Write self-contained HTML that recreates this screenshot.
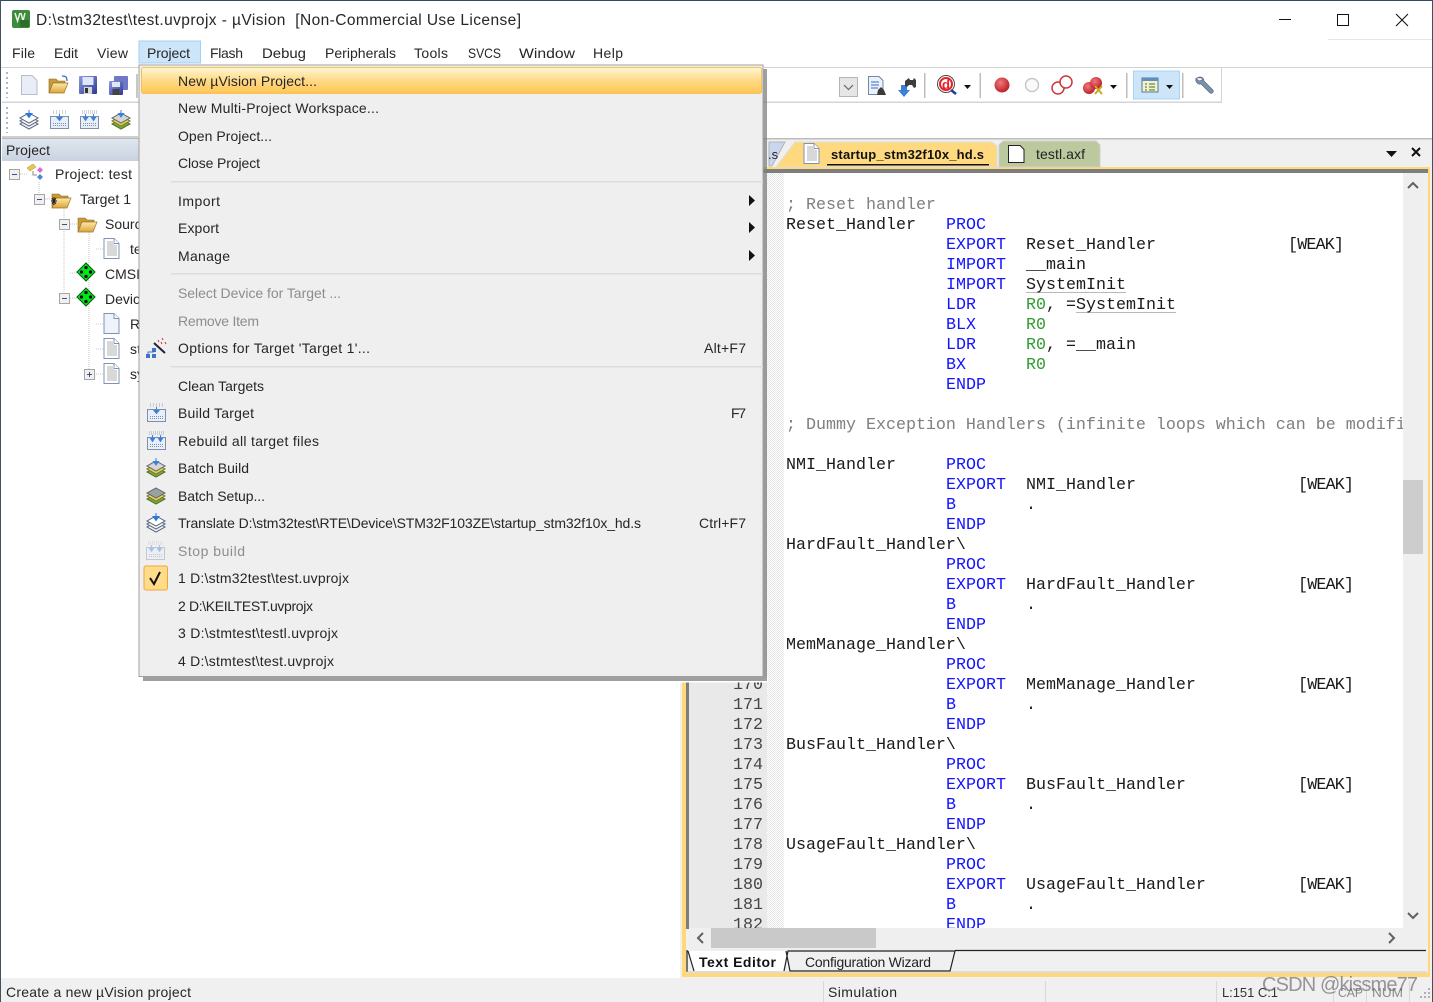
<!DOCTYPE html>
<html><head><meta charset="utf-8"><title>µVision</title>
<style>
html,body{margin:0;padding:0;background:#fff;width:1433px;height:1002px;overflow:hidden}
svg{display:block}
.u{font-family:"Liberation Sans",sans-serif;font-size:14px;fill:#262626}
.d{fill:#8d8d8d}
.c{font-family:"Liberation Mono",monospace;font-size:16.67px;fill:#1a1a1a;white-space:pre}
.k{fill:#1414ff}.g{fill:#7f7f7f}.r{fill:#2f9d2f}
.n{font-family:"Liberation Mono",monospace;font-size:16.67px;fill:#444}
</style></head><body>
<svg xmlns="http://www.w3.org/2000/svg" width="1433" height="1002" viewBox="0 0 1433 1002">
<defs>
<linearGradient id="hl" x1="0" y1="0" x2="0" y2="1"><stop offset="0" stop-color="#fff6d2"/><stop offset=".45" stop-color="#ffdc8e"/><stop offset="1" stop-color="#ffc552"/></linearGradient>
<linearGradient id="ph" x1="0" y1="0" x2="0" y2="1"><stop offset="0" stop-color="#dfe6ef"/><stop offset="1" stop-color="#c9d3e0"/></linearGradient>
<linearGradient id="fo" x1="0" y1="0" x2="0" y2="1"><stop offset="0" stop-color="#ffe9a8"/><stop offset="1" stop-color="#dba43a"/></linearGradient>
<linearGradient id="sv" x1="0" y1="0" x2="1" y2="1"><stop offset="0" stop-color="#8f9be0"/><stop offset="1" stop-color="#2d3a96"/></linearGradient>
<radialGradient id="rd" cx=".4" cy=".35" r=".7"><stop offset="0" stop-color="#f0787c"/><stop offset="1" stop-color="#b81a22"/></radialGradient>
<pattern id="dit" width="2" height="2" patternUnits="userSpaceOnUse"><rect width="2" height="2" fill="#fff"/><rect width="1" height="1" fill="#e6e6e6"/><rect x="1" y="1" width="1" height="1" fill="#e6e6e6"/></pattern>
<g id="doc"><path d="M1 .5H11L16 5.5V20.5H1Z" fill="#eef2fa" stroke="#7f93b5"/><path d="M11 .5V5.5H16" fill="#fff" stroke="#7f93b5"/></g>
<g id="docd"><path d="M1 .5H11L16 5.5V20.5H1Z" fill="#fff" stroke="#7f93b5"/><path d="M11 .5V5.5H16" fill="#fff" stroke="#7f93b5"/><rect x="4" y="3" width="7" height="15" fill="#d8d8d8"/><path d="M11 7h3v11h-3z" fill="#d8d8d8"/></g>
<g id="dia"><path d="M9 0L18 9L9 18L0 9Z" fill="#00e51c" stroke="#0a5a12"/><circle cx="9" cy="4.5" r="1.6"/><circle cx="9" cy="13.5" r="1.6"/><circle cx="4.5" cy="9" r="1.6"/><circle cx="13.5" cy="9" r="1.6"/></g>
<g id="fold"><path d="M1 17V3H8L10 5H17V7H5L1 17Z" fill="#c99a3a" stroke="#8d6b22" stroke-width=".6"/><path d="M1 17L5 7H20L16 17Z" fill="url(#fo)" stroke="#9c7626" stroke-width=".7"/></g>
<g id="minus"><rect x=".5" y=".5" width="10" height="10" fill="#f0f0f0" stroke="#a5a5a5"/><path d="M3 5.5H8" stroke="#3a4f8a"/></g>
<g id="plus"><rect x=".5" y=".5" width="10" height="10" fill="#f0f0f0" stroke="#a5a5a5"/><path d="M3 5.5H8M5.5 3V8" stroke="#3a4f8a"/></g>
<g id="build"><rect x=".5" y="6.5" width="18" height="12" fill="#e9eff8" stroke="#7d8fae"/><path d="M3 13.5h13M3 15.5h13" stroke="#7d8fae" stroke-dasharray="1 1"/><path d="M3 1h13M3 3h13" stroke="#99a5bd" stroke-dasharray="1 2"/><path d="M9.5 4v5M7 7.5l2.500 3 2.500-3z" fill="#3b7fe0" stroke="#3b7fe0"/></g>
<g id="rebuild"><rect x=".5" y="6.500" width="18" height="12" fill="#e9eff8" stroke="#7d8fae"/><path d="M3 13.5h13M3 15.5h13" stroke="#7d8fae" stroke-dasharray="1 1"/><path d="M2 1h15M2 3h15" stroke="#99a5bd" stroke-dasharray="1 1"/><path d="M5.500 4v5M3.500 7.500l2 3 2-3zM13.500 4v5M11.500 7.500l2 3 2-3z" fill="#3b7fe0" stroke="#3b7fe0"/></g>
<g id="batch"><path d="M10 9L19 14L10 19L1 14Z" fill="#7aa83a" stroke="#4d6e22"/><path d="M10 6L19 11L10 16L1 11Z" fill="#e5cf55" stroke="#7d7430"/><path d="M10 3L19 8L10 13L1 8Z" fill="#d4d6d6" stroke="#5f6565"/><path d="M10 0v5M7.500 3.500l2.500 3.500 2.500-3.500z" fill="#3b7fe0" stroke="#3b7fe0"/></g>
<g id="batch2"><path d="M10 8L19 13L10 18L1 13Z" fill="#7aa83a" stroke="#4d6e22"/><path d="M10 5L19 10L10 15L1 10Z" fill="#e5cf55" stroke="#7d7430"/><path d="M10 2L19 7L10 12L1 7Z" fill="#9ba0a0" stroke="#5f6565"/></g>
<g id="trans"><path d="M10 9L19 14L10 19L1 14Z" fill="#eef2f8" stroke="#55627c"/><path d="M10 6L19 11L10 16L1 11Z" fill="#f6f8fc" stroke="#55627c"/><path d="M10 3L19 8L10 13L1 8Z" fill="#fff" stroke="#55627c"/><path d="M10 0v5M7 3.500l3 4 3-4z" fill="#2b78e4" stroke="#2b78e4"/></g>
<g id="wand"><path d="M9 6L20 16" stroke="#223" stroke-width="2"/><path d="M13 3l1 2M17 1l1 2M20 5l1 2M16 5l1 2" stroke="#d13a3a"/><rect x="7" y="11" width="4" height="4" fill="#3f73c8"/><rect x="1" y="17" width="4" height="4" fill="#3f73c8"/><rect x="7" y="17" width="4" height="4" fill="#3f73c8"/><path d="M3 17V15H9" fill="none" stroke="#3f73c8"/></g>
</defs>

<!-- window base -->
<rect width="1433" height="1002" fill="#fff"/>
<rect y="0" width="1433" height="1" fill="#2d4a66"/>

<!-- title -->
<rect x="12" y="10" width="18" height="18" rx="2" fill="#3f8a3c"/><path d="M15 13l2.500 8 2.500-8M21 13l2 8 2-8" fill="none" stroke="#e4f3df" stroke-width="1.500"/><rect x="20" y="20" width="9" height="7" fill="#2b6e2b"/>
<text class="u" x="36" y="25" style="font-size:15.5px" textLength="485" lengthAdjust="spacing">D:\stm32test\test.uvprojx - µVision &#160;[Non-Commercial Use License]</text>
<path d="M1279 19.500H1291" stroke="#111"/><rect x="1337.500" y="14.500" width="11" height="11" fill="none" stroke="#111"/><path d="M1396 14L1408 26M1408 14L1396 26" stroke="#111"/>
<rect x="1328" y="39" width="104" height="1" fill="#e5e5e5"/>

<!-- menu bar -->
<rect x="139" y="41" width="61.500" height="22" fill="#cce5f8" stroke="#a2d1f6"/>
<text class="u" x="12" y="58" textLength="23">File</text>
<text class="u" x="54" y="58" textLength="24">Edit</text>
<text class="u" x="97" y="58" textLength="31">View</text>
<text class="u" x="147" y="58" textLength="43">Project</text>
<text class="u" x="210" y="58" textLength="33">Flash</text>
<text class="u" x="262" y="58" textLength="44" lengthAdjust="spacingAndGlyphs">Debug</text>
<text class="u" x="325" y="58" textLength="71" lengthAdjust="spacingAndGlyphs">Peripherals</text>
<text class="u" x="414" y="58" textLength="34">Tools</text>
<text class="u" x="468" y="58" textLength="33" lengthAdjust="spacingAndGlyphs">SVCS</text>
<text class="u" x="519" y="58" textLength="56" lengthAdjust="spacingAndGlyphs">Window</text>
<text class="u" x="593" y="58" textLength="30">Help</text>

<!-- toolbars -->
<rect x="0" y="67" width="1433" height="1" fill="#d2d2d2"/>
<rect x="2" y="101.500" width="1219" height="1.500" fill="#d5d5d5"/>
<rect x="1221" y="68" width="1" height="35" fill="#d5d5d5"/>
<rect x="2" y="136" width="136" height="2" fill="#cfcfcf"/>
<path d="M7 72V98M7 107V133" stroke="#b5b5b5" stroke-width="2" stroke-dasharray="2 3"/>
<path d="M21.500 75.500H32L37 80.500V94.500H21.500Z" fill="#e9edf5" stroke="#b4bdcc"/>
<g transform="translate(48,76)"><use href="#fold"/><path d="M14 0c4 0 5 1 5 5" fill="none" stroke="#3f6fb8" stroke-width="1.300"/></g>
<g transform="translate(79,76)"><rect width="18" height="18" rx="1" fill="url(#sv)"/><rect x="3.500" y="1" width="11" height="8" fill="#dfe6f8"/><rect x="5" y="11" width="8" height="7" fill="#d8d8d8"/><rect x="6" y="12" width="3" height="5" fill="#333"/></g>
<g transform="translate(109,76)"><rect x="5" width="14" height="14" rx="1" fill="#6f78c8"/><rect y="5" width="14" height="14" rx="1" fill="url(#sv)"/><rect x="3" y="6" width="8" height="5" fill="#dfe6f8"/><rect x="3.500" y="13" width="7" height="6" fill="#444"/></g>
<rect x="136" y="74" width="2" height="24" fill="#c8c8c8"/>
<use href="#trans" x="19" y="110"/><use href="#build" x="50" y="110"/><use href="#rebuild" x="80" y="110"/><use href="#batch" x="111" y="110"/>

<!-- right toolbar -->
<rect x="839.500" y="77.500" width="18" height="19" fill="#e6e6e6" stroke="#b4b4b4"/><path d="M844 85l4.500 4.500L853 85" fill="none" stroke="#666" stroke-width="1.200"/>
<g transform="translate(868,76)"><path d="M.5.500H11L15 4.500V18.500H.5Z" fill="#eaf1fb" stroke="#6f86ad"/><path d="M3 6h8M3 9h8M3 12h7" stroke="#3a6fc0"/><path d="M10 14l3-3 3 3 2 5h-9z" fill="#3a3a3a"/></g>
<g transform="translate(897,76)"><path d="M4 9h6v5h3l-6 7-6-7h3z" fill="#3b7fd8"/><path d="M8 5l4-3 1 2h3l1-2 2 2v7l-2 1-2-3h-3l-2 2-2-1z" fill="#3d3d3d"/></g>
<rect x="924" y="73" width="1.500" height="25" fill="#bdbdbd"/>
<g transform="translate(937,75)"><circle cx="9" cy="9" r="9" fill="#4a4a4a"/><circle cx="9" cy="9" r="8" fill="#fff"/><circle cx="9" cy="9" r="6" fill="none" stroke="#e8222a" stroke-width="2"/><text x="5" y="14" style="font:bold 13px 'Liberation Sans',sans-serif" fill="#e8222a">d</text><path d="M14 15l5 4" stroke="#1d3f9a" stroke-width="2.500"/></g>
<path d="M964 85h7l-3.500 4z" fill="#111"/>
<rect x="979.500" y="73" width="1.500" height="25" fill="#bdbdbd"/>
<circle cx="1002" cy="85" r="7.500" fill="url(#rd)"/>
<circle cx="1032" cy="85" r="6.500" fill="#fafafa" stroke="#c8c8c8" stroke-width="1.500"/>
<circle cx="1058" cy="88" r="6" fill="#fff" stroke="#c8383c" stroke-width="1.500"/><circle cx="1066" cy="82" r="6" fill="#fff" stroke="#c8383c" stroke-width="1.500"/>
<circle cx="1089" cy="88" r="6" fill="url(#rd)"/><circle cx="1096" cy="83" r="6" fill="url(#rd)"/><path d="M1095 86l7 8M1102 86l-7 8" stroke="#c9a820" stroke-width="2"/>
<path d="M1110 85h7l-3.500 4z" fill="#111"/>
<rect x="1126" y="73" width="1.500" height="25" fill="#bdbdbd"/>
<rect x="1133.500" y="71" width="46" height="28" fill="#cce5f8" stroke="#a8d4f5"/>
<rect x="1142" y="78" width="16" height="14" fill="#f4f2c8" stroke="#4e7a9e"/><rect x="1142" y="78" width="16" height="3" fill="#5d8fc2"/><path d="M1145 84h2M1149 84h6M1145 87h2M1149 87h6M1145 90h2M1149 90h6" stroke="#4a6a3a"/>
<path d="M1166 85h7l-3.500 4z" fill="#111"/>
<rect x="1182" y="73" width="1.500" height="25" fill="#bdbdbd"/>
<path d="M1197 78c3-2 7-1 7 3l9 9c1 2-1 4-3 3l-9-9c-4 1-6-3-5-6l3 3 3-1 0-2z" fill="#7c8fa8" stroke="#56677e" stroke-width=".6"/>

<!-- project pane -->
<rect x="2" y="138" width="140" height="1" fill="#b8b8b8"/>
<rect x="2" y="139" width="140" height="22" fill="url(#ph)"/>
<text class="u" x="6" y="155" textLength="44">Project</text>
<!-- tree dots -->
<path d="M20 174H28M39 182V194M45 199H52M64 207V220M64 229V298M64 224H78M70 273H78M70 298H78M89 232V373M96 249H103M96 324H103M96 349H103M96 374H103" stroke="#c4c4c4" stroke-dasharray="1 1" fill="none"/>
<use href="#minus" x="9" y="169"/>
<path d="M27 168l6-4 3 3-6 4z" fill="#e8c64f" stroke="#a8902f" stroke-width=".5"/><path d="M37 170l3-3 3 3-3 3z" fill="#d76bd3"/><path d="M37 177l3-3 3 3-3 3z" fill="#4c86d6"/><path d="M33 171v4h4" fill="none" stroke="#888"/>
<text class="u" x="55" y="179" textLength="77">Project: test</text>
<use href="#minus" x="34" y="194"/>
<use href="#fold" transform="translate(51,191)"/><path d="M52 198l4 6M56 198l-4 6M51 201h6M54 197v8" stroke="#222" stroke-width="1"/>
<text class="u" x="80" y="204" textLength="51">Target 1</text>
<use href="#minus" x="59" y="219"/><use href="#fold" transform="translate(77,215)"/>
<text class="u" x="105" y="229">Source Group 1</text>
<use href="#docd" x="103" y="238"/>
<text class="u" x="130" y="254">test.c</text>
<use href="#dia" x="77" y="263"/><text class="u" x="105" y="279">CMSIS</text>
<use href="#minus" x="59" y="293"/><use href="#dia" x="77" y="288"/><text class="u" x="105" y="304">Device</text>
<use href="#doc" x="103" y="313"/><text class="u" x="130" y="329">RTE_Device.h</text>
<use href="#docd" x="103" y="338"/><text class="u" x="130" y="354">startup</text>
<use href="#plus" x="84" y="369"/><use href="#docd" x="103" y="363"/><text class="u" x="130" y="379">system</text>

<!-- editor frame -->
<rect x="680" y="138" width="752" height="840" fill="#f0f0f0"/>
<rect x="680" y="138" width="752" height="1.500" fill="#bdbdbd"/>
<rect x="682" y="167" width="748" height="810" fill="#ffd877"/>
<rect x="686" y="169" width="742" height="804" fill="#f0f0f0"/>
<rect x="686" y="169" width="742" height="4" fill="#7d7d7d"/>
<rect x="686" y="169" width="3" height="760" fill="#7d7d7d"/>
<rect x="689" y="173" width="78" height="756" fill="#e9e9e9"/>
<rect x="767" y="173" width="17" height="756" fill="url(#dit)"/>
<rect x="784" y="173" width="619" height="755" fill="#fff"/>
<rect x="1403" y="173" width="20" height="755" fill="#efefef"/>
<rect x="1403" y="480" width="20" height="74" fill="#cdcdcd"/>
<path d="M1408 188l5-5 5 5" fill="none" stroke="#606060" stroke-width="2"/>
<path d="M1408 913l5 5 5-5" fill="none" stroke="#606060" stroke-width="2"/>

<!-- tab bar -->
<path d="M769 166V142H785L772 166Z" fill="#c9d6ef" stroke="#b5b5b5"/>
<text class="u" x="768" y="159" style="font-size:13px">.s</text>
<path d="M776 167L795 142H992L997 146V167Z" fill="#ffd97f" stroke="#dedede"/>
<use href="#docd" x="803" y="143"/>
<text class="u" x="831" y="159" textLength="153" style="font-weight:bold;fill:#111;font-size:13px">startup_stm32f10x_hd.s</text>
<rect x="827" y="164" width="162" height="1.500" fill="#111"/>
<path d="M999 167V145L1003 141H1096L1100 145V167Z" fill="#bcc99f" stroke="#cfcfcf"/>
<path d="M1008.500 145.500H1020L1024 149.500V162.500H1008.500Z" fill="#fff" stroke="#222"/>
<text class="u" x="1036" y="159" textLength="49" style="fill:#222">testl.axf</text>
<path d="M1386 151h11l-5.500 6z" fill="#111"/>
<path d="M1412 148l8 8M1420 148l-8 8" stroke="#111" stroke-width="2"/>

<!-- line numbers -->
<g>
<text class="n" x="733" y="689">170</text><text class="n" x="733" y="709">171</text><text class="n" x="733" y="729">172</text><text class="n" x="733" y="749">173</text><text class="n" x="733" y="769">174</text><text class="n" x="733" y="789">175</text><text class="n" x="733" y="809">176</text><text class="n" x="733" y="829">177</text><text class="n" x="733" y="849">178</text><text class="n" x="733" y="869">179</text><text class="n" x="733" y="889">180</text><text class="n" x="733" y="909">181</text><text class="n" x="733" y="929">182</text>
</g>

<!-- code -->
<path d="M1026 292.500H1126M1076 312.500H1176" stroke="#b8b8b8"/>
<text class="c g" x="786" y="209">; Reset handler</text>
<text class="c" x="786" y="229">Reset_Handler</text><text class="c k" x="946" y="229">PROC</text>
<text class="c k" x="946" y="249">EXPORT</text><text class="c" x="1026" y="249">Reset_Handler</text><text class="c" x="1288" y="249" textLength="56">[WEAK]</text>
<text class="c k" x="946" y="269">IMPORT</text><text class="c" x="1026" y="269">__main</text>
<text class="c k" x="946" y="289">IMPORT</text><text class="c" x="1026" y="289">SystemInit</text>
<text class="c k" x="946" y="309">LDR</text><text class="c" x="1026" y="309"><tspan class="r">R0</tspan>, =SystemInit</text>
<text class="c k" x="946" y="329">BLX</text><text class="c r" x="1026" y="329">R0</text>
<text class="c k" x="946" y="349">LDR</text><text class="c" x="1026" y="349"><tspan class="r">R0</tspan>, =__main</text>
<text class="c k" x="946" y="369">BX</text><text class="c r" x="1026" y="369">R0</text>
<text class="c k" x="946" y="389">ENDP</text>
<svg x="784" y="410" width="619" height="30"><text class="c g" x="2" y="19">; Dummy Exception Handlers (infinite loops which can be modified)</text></svg>
<text class="c" x="786" y="469">NMI_Handler</text><text class="c k" x="946" y="469">PROC</text>
<text class="c k" x="946" y="489">EXPORT</text><text class="c" x="1026" y="489">NMI_Handler</text><text class="c" x="1298" y="489" textLength="56">[WEAK]</text>
<text class="c k" x="946" y="509">B</text><text class="c" x="1026" y="509">.</text>
<text class="c k" x="946" y="529">ENDP</text>
<text class="c" x="786" y="549">HardFault_Handler\</text>
<text class="c k" x="946" y="569">PROC</text>
<text class="c k" x="946" y="589">EXPORT</text><text class="c" x="1026" y="589">HardFault_Handler</text><text class="c" x="1298" y="589" textLength="56">[WEAK]</text>
<text class="c k" x="946" y="609">B</text><text class="c" x="1026" y="609">.</text>
<text class="c k" x="946" y="629">ENDP</text>
<text class="c" x="786" y="649">MemManage_Handler\</text>
<text class="c k" x="946" y="669">PROC</text>
<text class="c k" x="946" y="689">EXPORT</text><text class="c" x="1026" y="689">MemManage_Handler</text><text class="c" x="1298" y="689" textLength="56">[WEAK]</text>
<text class="c k" x="946" y="709">B</text><text class="c" x="1026" y="709">.</text>
<text class="c k" x="946" y="729">ENDP</text>
<text class="c" x="786" y="749">BusFault_Handler\</text>
<text class="c k" x="946" y="769">PROC</text>
<text class="c k" x="946" y="789">EXPORT</text><text class="c" x="1026" y="789">BusFault_Handler</text><text class="c" x="1298" y="789" textLength="56">[WEAK]</text>
<text class="c k" x="946" y="809">B</text><text class="c" x="1026" y="809">.</text>
<text class="c k" x="946" y="829">ENDP</text>
<text class="c" x="786" y="849">UsageFault_Handler\</text>
<text class="c k" x="946" y="869">PROC</text>
<text class="c k" x="946" y="889">EXPORT</text><text class="c" x="1026" y="889">UsageFault_Handler</text><text class="c" x="1298" y="889" textLength="56">[WEAK]</text>
<text class="c k" x="946" y="909">B</text><text class="c" x="1026" y="909">.</text>
<text class="c k" x="946" y="929">ENDP</text>

<!-- horizontal scrollbar and bottom tabs -->
<rect x="689" y="928" width="739" height="22" fill="#efefef"/>
<rect x="711" y="928" width="165" height="20" fill="#c9c9c9"/>
<path d="M703 933l-5 5 5 5" fill="none" stroke="#606060" stroke-width="2"/>
<path d="M1389 933l5 5-5 5" fill="none" stroke="#606060" stroke-width="2"/>
<rect x="689" y="950" width="739" height="23" fill="#f0f0f0"/>
<path d="M688 951L694 971H783L788 951Z" fill="#fff"/>
<path d="M688 951L694 971M784 971L788 951H955L950 971H790L786 951M955 950.500H1426M687 950V972" fill="none" stroke="#222" stroke-width="1.200"/>
<rect x="687" y="971.500" width="740" height="1" fill="#c8c8c8"/>
<text class="u" x="699" y="967" textLength="77" style="font-weight:bold;fill:#111">Text Editor</text>
<text class="u" x="805" y="967" textLength="126" style="fill:#222">Configuration Wizard</text>

<!-- white cover beneath menu, above editor -->
<rect x="680" y="677" width="88" height="5.500" fill="#fff"/>
<rect x="0" y="677" width="680" height="301" fill="#fff"/>

<!-- window side edges -->
<rect x="0" y="0" width="1" height="1002" fill="#44505c"/>
<rect x="1432" y="0" width="1" height="1002" fill="#44505c"/>

<!-- menu -->
<rect x="143" y="69" width="624" height="612" fill="#7f7f7f" opacity=".75"/>
<rect x="139" y="65" width="624" height="611.500" fill="#efefef" stroke="#a0a0a0"/>
<rect x="141.500" y="67.500" width="620" height="26" rx="2" fill="url(#hl)" stroke="#f6c35a"/>
<rect x="171" y="181" width="592" height="1.500" fill="#dcdcdc"/>
<rect x="171" y="273" width="592" height="1.500" fill="#dcdcdc"/>
<rect x="171" y="366" width="592" height="1.500" fill="#dcdcdc"/>

<text class="u" x="178" y="86" textLength="139">New µVision Project...</text>
<text class="u" x="178" y="113" textLength="201">New Multi-Project Workspace...</text>
<text class="u" x="178" y="141" textLength="94">Open Project...</text>
<text class="u" x="178" y="168" textLength="82">Close Project</text>
<text class="u" x="178" y="206" textLength="42">Import</text>
<text class="u" x="178" y="233" textLength="41">Export</text>
<text class="u" x="178" y="261" textLength="52">Manage</text>
<path d="M749 195l6 5.500-6 5.500zM749 222l6 5.500-6 5.500zM749 250l6 5.500-6 5.500z" fill="#111"/>
<text class="u d" x="178" y="298" textLength="163">Select Device for Target ...</text>
<text class="u d" x="178" y="326" textLength="81">Remove Item</text>
<use href="#wand" x="145" y="337"/>
<text class="u" x="178" y="353" textLength="192">Options for Target 'Target 1'...</text>
<text class="u" x="704" y="353" textLength="42">Alt+F7</text>
<text class="u" x="178" y="391" textLength="86">Clean Targets</text>
<use href="#build" x="147" y="403"/>
<text class="u" x="178" y="418" textLength="76">Build Target</text>
<text class="u" x="731" y="418" textLength="15">F7</text>
<use href="#rebuild" x="147" y="431"/>
<text class="u" x="178" y="446" textLength="141">Rebuild all target files</text>
<use href="#batch" x="146" y="458"/>
<text class="u" x="178" y="473" textLength="71">Batch Build</text>
<use href="#batch2" x="146" y="486"/>
<text class="u" x="178" y="501" textLength="87">Batch Setup...</text>
<use href="#trans" x="146" y="513"/>
<text class="u" x="178" y="528" textLength="463">Translate D:\stm32test\RTE\Device\STM32F103ZE\startup_stm32f10x_hd.s</text>
<text class="u" x="699" y="528" textLength="47">Ctrl+F7</text>
<g opacity=".4"><use href="#rebuild" x="146" y="541"/></g>
<text class="u d" x="178" y="556" textLength="67">Stop build</text>
<rect x="144" y="566" width="23.500" height="24" rx="2" fill="#ffdc8a" stroke="#f0a63a"/>
<path d="M150 578l4 6 6-12" fill="none" stroke="#111" stroke-width="2"/>
<text class="u" x="178" y="583" textLength="171">1 D:\stm32test\test.uvprojx</text>
<text class="u" x="178" y="611" textLength="135">2 D:\KEILTEST.uvprojx</text>
<text class="u" x="178" y="638" textLength="160">3 D:\stmtest\testl.uvprojx</text>
<text class="u" x="178" y="666" textLength="156">4 D:\stmtest\test.uvprojx</text>

<!-- status bar -->
<rect x="1" y="978" width="1431" height="24" fill="#f0f0f0"/>
<rect x="823" y="981" width="1" height="21" fill="#d8d8d8"/>
<rect x="1045" y="981" width="1" height="21" fill="#d8d8d8"/>
<rect x="1216" y="981" width="1" height="21" fill="#d8d8d8"/>
<rect x="1333" y="981" width="1" height="21" fill="#d8d8d8"/>
<rect x="1366" y="981" width="1" height="21" fill="#d8d8d8"/>
<rect x="1409" y="981" width="1" height="21" fill="#d8d8d8"/>
<text class="u" x="6" y="997" textLength="185">Create a new µVision project</text>
<text class="u" x="828" y="997" textLength="69">Simulation</text>
<text class="u" x="1222" y="997" textLength="56" style="font-size:13px;fill:#333">L:151 C:1</text>
<text class="u" x="1338" y="997" textLength="25" lengthAdjust="spacingAndGlyphs" style="font-size:13px;fill:#8a8a8a">CAP</text>
<text class="u" x="1372" y="997" textLength="31" lengthAdjust="spacingAndGlyphs" style="font-size:13px;fill:#8a8a8a">NUM</text>
<path d="M1428 988h2v2h-2zM1424 992h2v2h-2zM1428 992h2v2h-2zM1420 996h2v2h-2zM1424 996h2v2h-2zM1428 996h2v2h-2z" fill="#b0b0b0"/>
<text x="1262" y="991" textLength="156" style="font-family:'Liberation Sans',sans-serif;font-size:20px;fill:#6e6e6e;fill-opacity:.7">CSDN @kissme77</text>
</svg>
</body></html>
